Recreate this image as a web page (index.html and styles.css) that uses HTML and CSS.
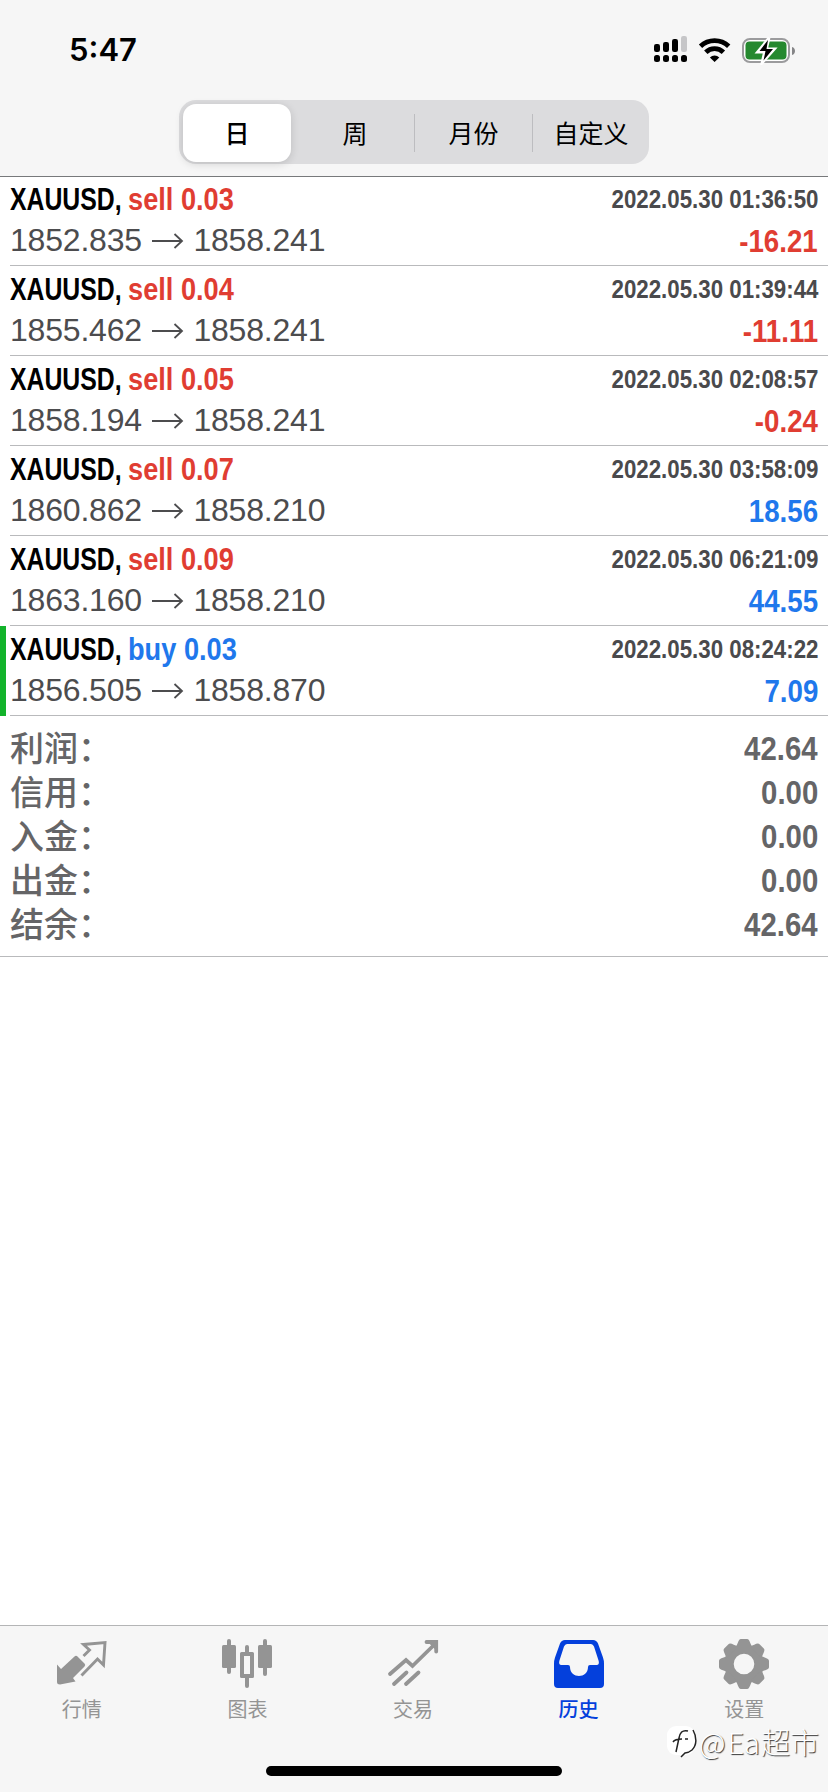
FILE: index.html
```
<!DOCTYPE html>
<html lang="zh-CN">
<head>
<meta charset="utf-8">
<title>历史</title>
<link rel="stylesheet" href="styles.css">
</head>
<body>
<div class="app">
  <header class="header">
    <div class="status">
      <span class="clock">5:47</span>
      <svg class="status-icons" viewBox="0 0 144 32" width="144" height="32">
        <g>
          <rect x="3" y="11" width="6" height="8" rx="2.2"/>
          <rect x="12" y="9" width="6" height="10" rx="2.2"/>
          <rect x="21" y="6" width="6" height="13" rx="2.2"/>
          <rect x="30" y="3" width="6" height="16" rx="2.2" fill="#c6c6c8"/>
          <rect x="3" y="22" width="6" height="7" rx="2.5"/>
          <rect x="12" y="22" width="6" height="7" rx="2.5"/>
          <rect x="21" y="22" width="6" height="7" rx="2.5"/>
          <rect x="30" y="22" width="6" height="7" rx="2.5"/>
        </g>
        <g fill="none" stroke="#000" stroke-width="4.800">
          <path d="M49.500 13.200a20.500 20.500 0 0 1 28.200 0"/>
          <path d="M54.800 19.200a12.500 12.500 0 0 1 17.600 0"/>
        </g>
        <path d="M63.600 29l-4.700-4.600a6.800 6.800 0 0 1 9.400 0z"/>
        <rect x="92" y="6" width="46" height="23" rx="7" fill="#fff" stroke="#9b9b9d" stroke-width="2"/>
        <rect x="94.500" y="8.500" width="41" height="18" rx="4" fill="#25892f"/>
        <path d="M141 14c4 1 4 7 0 8z" fill="#858587"/>
        <path d="M118 5L106.500 19h7l-2.500 11 12.500-14h-8z" fill="#fff" stroke="#fff" stroke-width="2.800"/>
        <path d="M117 7L108.500 18h6l-2 9.500 9.500-11.500h-6.500z"/>
      </svg>
    </div>
    <nav class="segments">
      <span class="segment segment-on">日</span>
      <span class="segment">周</span>
      <span class="segment divided">月份</span>
      <span class="segment divided">自定义</span>
    </nav>
  </header>

  <main class="content">
    <section class="deals">
      <article class="deal">
        <div class="line top"><span class="symbol"><b>XAUUSD,</b></span><b class="side sell">sell 0.03</b><b class="date">2022.05.30 01:36:50</b></div>
        <div class="line bottom"><span>1852.835</span><svg class="arrow" viewBox="0 0 32 16"><path d="M0 8h30M22.500 1l7.500 7-7.500 7"/></svg><span>1858.241</span><b class="profit sell">-16.21</b></div>
      </article>
      <article class="deal">
        <div class="line top"><span class="symbol"><b>XAUUSD,</b></span><b class="side sell">sell 0.04</b><b class="date">2022.05.30 01:39:44</b></div>
        <div class="line bottom"><span>1855.462</span><svg class="arrow" viewBox="0 0 32 16"><path d="M0 8h30M22.500 1l7.500 7-7.500 7"/></svg><span>1858.241</span><b class="profit sell">-11.11</b></div>
      </article>
      <article class="deal">
        <div class="line top"><span class="symbol"><b>XAUUSD,</b></span><b class="side sell">sell 0.05</b><b class="date">2022.05.30 02:08:57</b></div>
        <div class="line bottom"><span>1858.194</span><svg class="arrow" viewBox="0 0 32 16"><path d="M0 8h30M22.500 1l7.500 7-7.500 7"/></svg><span>1858.241</span><b class="profit sell">-0.24</b></div>
      </article>
      <article class="deal">
        <div class="line top"><span class="symbol"><b>XAUUSD,</b></span><b class="side sell">sell 0.07</b><b class="date">2022.05.30 03:58:09</b></div>
        <div class="line bottom"><span>1860.862</span><svg class="arrow" viewBox="0 0 32 16"><path d="M0 8h30M22.500 1l7.500 7-7.500 7"/></svg><span>1858.210</span><b class="profit buy">18.56</b></div>
      </article>
      <article class="deal">
        <div class="line top"><span class="symbol"><b>XAUUSD,</b></span><b class="side sell">sell 0.09</b><b class="date">2022.05.30 06:21:09</b></div>
        <div class="line bottom"><span>1863.160</span><svg class="arrow" viewBox="0 0 32 16"><path d="M0 8h30M22.500 1l7.500 7-7.500 7"/></svg><span>1858.210</span><b class="profit buy">44.55</b></div>
      </article>
      <article class="deal marked">
        <div class="line top"><span class="symbol"><b>XAUUSD,</b></span><b class="side buy">buy 0.03</b><b class="date">2022.05.30 08:24:22</b></div>
        <div class="line bottom"><span>1856.505</span><svg class="arrow" viewBox="0 0 32 16"><path d="M0 8h30M22.500 1l7.500 7-7.500 7"/></svg><span>1858.870</span><b class="profit buy">7.09</b></div>
      </article>
    </section>
    <dl class="summary">
      <div class="total"><dt>利润：</dt><dd>42.64</dd></div>
      <div class="total"><dt>信用：</dt><dd>0.00</dd></div>
      <div class="total"><dt>入金：</dt><dd>0.00</dd></div>
      <div class="total"><dt>出金：</dt><dd>0.00</dd></div>
      <div class="total"><dt>结余：</dt><dd>42.64</dd></div>
    </dl>
  </main>

  <footer class="footer">
    <nav class="tabs">
      <a class="tab">
        <svg viewBox="0 0 52 52" class="icon">
          <g transform="translate(-1 0)">
          <path fill="currentColor" d="M19.500 18.500q1.500-1.500 3 0l7 7q1.500 1.500 0 3L18 40l2.500 3.500-15.500 3c-2 0-3-.8-3-2.500V26.500l4 4.500z"/>
          <path d="M28.500 18l6-6L28.500 6.500l21.500-2-1.500 22.500-6-6L26.500 37.500" fill="none" stroke="currentColor" stroke-width="2.900"/>
          </g>
        </svg>
        <span>行情</span>
      </a>
      <a class="tab">
        <svg viewBox="0 0 52 52" class="icon" fill="currentColor">
          <rect x="1" y="7" width="14" height="23" rx="1.500"/><rect x="6" y="1" width="4" height="35" rx="2"/>
          <path fill-rule="evenodd" d="M20.500 14h11q1.500 0 1.500 1.500v23q0 1.500-1.500 1.500h-11q-1.500 0-1.500-1.500v-23q0-1.500 1.500-1.500zM23 18v18h6V18z"/>
          <rect x="24" y="7" width="4" height="10" rx="2"/><rect x="24" y="38" width="4" height="12" rx="2"/>
          <rect x="37" y="7" width="14" height="23" rx="1.500"/><rect x="42" y="1" width="4" height="37" rx="2"/>
        </svg>
        <span>图表</span>
      </a>
      <a class="tab">
        <svg viewBox="0 0 52 52" class="icon" fill="none" stroke="currentColor" stroke-width="3.800" stroke-linecap="round">
          <path d="M3 36L19 22l6.500 6L49 5M39.500 4H49.200V13.500M7 46l12.500-11.500M19 46l12.500-11.500"/>
          <path d="M39 2.200h12v12z" fill="currentColor" stroke="none"/>
        </svg>
        <span>交易</span>
      </a>
      <a class="tab tab-on">
        <svg viewBox="0 0 52 52" class="icon">
          <path fill="currentColor" fill-rule="evenodd" d="M12 2h28q3.500 0 5 3.500l5 14q1 3 1 6V46q0 4-4 4H5q-4 0-4-4V25.500q0-3 1-6l5-14Q8.500 2 12 2zM14 6q-2 0-3 2.500L6.300 23q-.8 4 2 4H15q2 0 2 2c0 12 18 12 18 0q0-2 2-2h6.700q2.800 0 2-4L41 8.500Q40 6 38 6z"/>
        </svg>
        <span>历史</span>
      </a>
      <a class="tab">
        <svg viewBox="0 0 52 52" class="icon">
          <defs><path id="tooth" d="M16.500 9.500c3.500-1 3-8.500 6.500-8.500h6c3.500 0 3 7.500 6.500 8.500z"/></defs>
          <g fill="currentColor">
            <circle cx="26" cy="26" r="14.700" fill="none" stroke="currentColor" stroke-width="8.800"/>
            <use href="#tooth"/><use href="#tooth" transform="rotate(45 26 26)"/><use href="#tooth" transform="rotate(90 26 26)"/><use href="#tooth" transform="rotate(135 26 26)"/><use href="#tooth" transform="rotate(180 26 26)"/><use href="#tooth" transform="rotate(225 26 26)"/><use href="#tooth" transform="rotate(270 26 26)"/><use href="#tooth" transform="rotate(315 26 26)"/>
          </g>
        </svg>
        <span>设置</span>
      </a>
    </nav>
    <div class="home-bar"></div>
  </footer>

  <div class="watermark">
    <svg viewBox="0 0 32 36" width="32" height="36">
      <rect x="0" y="3" width="28" height="29" rx="9" fill="#fff"/>
      <path d="M26 7c4 7 4 15-1 20q-3 2.500-7 3l-4 4" fill="none" stroke="#222" stroke-width="1.500"/>
      <path d="M21 8c-6-1.500-8 2-9 7l-3 14M6 19q2-3 9-3m3 0h3" fill="none" stroke="#222" stroke-width="1.500"/>
    </svg>
    <span class="at">@</span><span class="ea">Ea</span><span>超市</span>
  </div>
</div>
</body>
</html>
```
FILE: styles.css
```
body {
  margin: 0;
  background: #fff;
  font-family: "Liberation Sans", "Noto Sans CJK SC", sans-serif;
}
.app {
  position: relative;
  display: flex;
  flex-direction: column;
  width: 828px;
  height: 1792px;
  overflow: hidden;
}
.header {
  box-sizing: border-box;
  height: 177px;
  background: #f6f6f6;
  border-bottom: 1px solid #77797b;
}
.status {
  display: flex;
  justify-content: space-between;
  align-items: center;
  box-sizing: border-box;
  height: 100px;
  padding: 0 33px 2px 69px;
}
.clock {
  font: 600 31px/40px Inter, sans-serif;
  padding-top: 2px;
}
.segments {
  display: grid;
  grid-template-columns: 117px 118px 118px 117px;
  box-sizing: border-box;
  width: 470px;
  height: 64px;
  margin-left: 179px;
  border-radius: 17px;
  background: #dcdcde;
}
.segment {
  display: flex;
  align-items: center;
  justify-content: center;
  padding-bottom: 2px;
  font: 400 25px/36px "Noto Sans CJK SC", sans-serif;
}
.segment-on {
  margin: 4px 5px 4px 4px;
  border-radius: 13px;
  background: #fff;
  font-weight: 500;
  box-shadow: 0 2px 8px rgba(0, 0, 0, .14);
}
.divided {
  margin: 14px 0;
  border-left: 1px solid #bdbdc0;
}
.content {
  flex: 1;
  margin-top: -1px;
}
.deal {
  box-sizing: border-box;
  height: 90px;
  margin-left: 10px;
  border-bottom: 1px solid #b9babc;
}
.marked {
  margin-left: 0;
  padding-left: 4px;
  border-left: 6px solid #13b32b;
  border-bottom: 0;
  background: linear-gradient(#b9babc, #b9babc) 4px 89px / 100% 1px no-repeat;
}
.line {
  display: flex;
  padding-right: 10px;
  white-space: nowrap;
  font-size: 32px;
}
.top { line-height: 46px; }
.bottom {
  line-height: 36px;
  color: #4c4c4e;
}
.bottom span { letter-spacing: -.2px; }
.symbol { width: 118px; }
.symbol b {
  display: inline-block;
  transform: scaleX(.775);
  transform-origin: left;
}
.side {
  transform: scaleX(.85);
  transform-origin: left;
}
.sell { color: #e03d32; }
.buy { color: #1f78ec; }
.date {
  margin-left: auto;
  font-size: 26px;
  color: #4a4a4c;
  transform: scaleX(.857);
  transform-origin: right;
}
.arrow {
  width: 32px;
  height: 16px;
  margin: 11px 9.500px 0 10px;
  fill: none;
  stroke: currentColor;
  stroke-width: 1.800;
}
.profit {
  margin-left: auto;
  padding-top: 1px;
  transform: scaleX(.865);
  transform-origin: right;
}
.summary {
  margin: 0;
  padding: 11px 10px 9px 10px;
  border-bottom: 1px solid #b9babc;
  color: #656567;
}
.total {
  display: flex;
  justify-content: space-between;
  height: 44px;
  line-height: 44px;
}
.total dt {
  font-weight: 500;
  font-size: 34px;
}
.total dd {
  margin: 0;
  font-weight: 700;
  font-size: 33px;
  transform: scaleX(.89);
  transform-origin: right;
}
.footer {
  box-sizing: border-box;
  height: 167px;
  border-top: 1px solid #b4b5b6;
  background: #f6f6f6;
}
.tabs {
  display: grid;
  grid-template-columns: repeat(5, 1fr);
  height: 140px;
}
.tab {
  display: flex;
  flex-direction: column;
  align-items: center;
  padding-top: 12px;
  padding-right: 2px;
  color: #949494;
  font: 400 20px/30px "Noto Sans CJK SC", sans-serif;
}
.tab-on { color: #0440dc; }
.tab-on span { font-weight: 500; }
.icon {
  width: 52px;
  height: 52px;
  margin-bottom: 4px;
}
.home-bar {
  width: 296px;
  height: 10px;
  margin: 0 auto;
  border-radius: 5px;
  background: #000;
}
.watermark {
  position: absolute;
  left: 667px;
  top: 1723px;
  display: flex;
  align-items: center;
  color: #fff;
  font: 300 29px/36px "Noto Sans CJK SC", sans-serif;
  text-shadow: 1px 1px 1px #333;
}
.ea { margin: 0 1px 0 2px; }
```
